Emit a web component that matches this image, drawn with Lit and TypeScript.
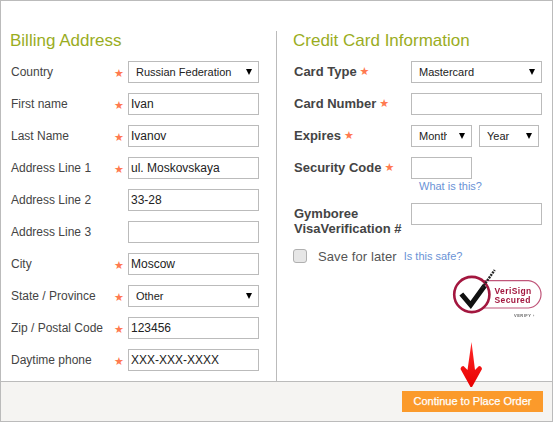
import { LitElement, html, css, svg } from "lit";
import { customElement } from "lit/decorators.js";

const billing = [
  { label: "Country", req: true, select: "Russian Federation" },
  { label: "First name", req: true, value: "Ivan" },
  { label: "Last Name", req: true, value: "Ivanov" },
  { label: "Address Line 1", req: true, value: "ul. Moskovskaya" },
  { label: "Address Line 2", req: false, value: "33-28" },
  { label: "Address Line 3", req: false, value: "" },
  { label: "City", req: true, value: "Moscow" },
  { label: "State / Province", req: true, select: "Other" },
  { label: "Zip / Postal Code", req: true, value: "123456" },
  { label: "Daytime phone", req: true, value: "XXX-XXX-XXXX" },
];

@customElement("app-root")
export class AppRoot extends LitElement {
  static styles = css`
    :host { display: block; width: 553px; height: 422px; font-family: "Liberation Sans", Arial, sans-serif; color: #444; }
    .frame { position: relative; box-sizing: border-box; width: 553px; height: 422px; border: 1px solid #bbb; display: flex; flex-direction: column; background: #fff; }
    .columns { flex: 1; display: flex; padding-top: 30px; min-height: 0; }
    .billing { width: 275px; box-sizing: border-box; padding-left: 9px; }
    .card { flex: 1; border-left: 1px solid #bbb; padding-left: 16px; }
    h2 { margin: 0; height: 30px; font-size: 17px; line-height: 20px; font-weight: 400; color: #9aad1e; }
    .rows { display: flex; flex-direction: column; gap: 10px; }
    .row { display: grid; grid-template-columns: 103px 14px 131px; align-items: center; height: 22px; padding-left: 1px; font-size: 12px; }
    .star { color: #ff7a50; font-family: "DejaVu Sans", sans-serif; font-weight: 400; font-size: 11px; line-height: 22px; height: 22px; padding-top: 2px; box-sizing: border-box; }
    input[type="text"], select { box-sizing: border-box; height: 22px; width: 131px; border: 1px solid #bbb; background: #fff; margin: 0; border-radius: 0; font: 12px "Liberation Sans", Arial, sans-serif; color: #222; outline: none; }
    input[type="text"] { padding: 0 2px; }
    select { appearance: none; -webkit-appearance: none; padding: 0 24px 0 7px; font-size: 11px; }
    .sel { position: relative; display: block; height: 22px; width: 131px; }
    .sel.short { width: 61px; }
    .sel.year { width: 60px; }
    .arrow { position: absolute; right: 7px; top: 8px; width: 6px; height: 6px; pointer-events: none; }
    .crow { display: grid; grid-template-columns: 117px auto; align-items: start; font-size: 13px; font-weight: 700; color: #444; padding-left: 1px; }
    .crow .lbl { display: flex; align-items: center; gap: 3px; height: 22px; line-height: 22px; }
    .crow .star { line-height: 14px; height: 14px; padding: 0; }
    .pair { display: flex; gap: 7px; }
    input.short { width: 61px; }
    .link { color: #6a93d6; font-size: 11px; font-weight: 400; text-decoration: none; }
    .what { display: block; line-height: 14px; padding-left: 8px; }
    .crow .two { display: block; height: 33px; line-height: 15px; padding-top: 3px; box-sizing: border-box; }
    .stack { display: flex; flex-direction: column; }
    .save { display: flex; align-items: center; margin-top: 12px; height: 16px; font-size: 13px; letter-spacing: 0.1px; color: #555; }
    .save input { appearance: none; -webkit-appearance: none; width: 14px; height: 14px; margin: 0 11px 0 0; background: #e6e6e6; border: 1px solid #b0b0b0; border-radius: 3px; }
    .save .link { margin-left: 7px; letter-spacing: 0; }
    .logoBox { display: flex; justify-content: flex-end; padding-right: 4px; }
    .logo { filter: blur(0.35px); }
    .footer { height: 40px; box-sizing: border-box; border-top: 1px solid #bbb; background: #f5f4f2; display: flex; justify-content: flex-end; align-items: flex-start; padding: 9px 9px 0 0; }
    .btn { box-sizing: border-box; width: 141px; height: 21px; border: 0; padding: 0; background: #fb9a2b; color: #fff; font: 400 11px/21px "Liberation Sans", Arial, sans-serif; -webkit-text-stroke: 0.25px #fff; }
    .red { position: absolute; left: 458px; top: 338px; width: 23px; height: 48px; pointer-events: none; }
  `;

  private sel(v: string, cls = "") {
    return html`<span class="sel ${cls}"><select style="width:100%"><option>${v}</option></select>
      <svg class="arrow" viewBox="0 0 6 6"><polygon points="0,0 6,0 3,6" fill="#000"/></svg></span>`;
  }

  private logo() {
    return svg`<svg class="logo" width="100" height="56" viewBox="0 0 100 56">
      <path d="M28 16.7 H80.5 A13.7 13.7 0 0 1 80.5 44 H28" fill="none" stroke="#c0567a" stroke-width="1.2"/>
      <circle cx="23.8" cy="30.5" r="17.6" fill="#fff" stroke="#a3173f" stroke-width="2.6"/>
      <path d="M13.3 30 L22.7 41 L36.7 21.7" fill="none" stroke="#111" stroke-width="5"/>
      <path d="M34 24 L46.7 6" fill="none" stroke="#222" stroke-width="2.4" stroke-dasharray="2 1"/>
      <text x="46.5" y="30" font-family="Liberation Sans, Arial, sans-serif" font-size="8.5" font-weight="700" fill="#a3173f" letter-spacing=".4">VeriSign</text>
      <text x="46.5" y="39" font-family="Liberation Sans, Arial, sans-serif" font-size="8.5" font-weight="700" fill="#a3173f" letter-spacing=".4">Secured</text>
      <text x="66" y="53" font-family="Liberation Sans, Arial, sans-serif" font-size="4" font-weight="700" fill="#666" letter-spacing=".5">VERIFY ›</text>
    </svg>`;
  }

  render() {
    return html`<div class="frame">
      <div class="columns">
        <section class="billing">
          <h2>Billing Address</h2>
          <div class="rows">
            ${billing.map((r) => html`<div class="row">
              <span>${r.label}</span>
              <span class="star">${r.req ? "★" : ""}</span>
              ${r.select ? this.sel(r.select) : html`<input type="text" .value=${r.value ?? ""} />`}
            </div>`)}
          </div>
        </section>
        <section class="card">
          <h2>Credit Card Information</h2>
          <div class="rows">
            <div class="crow"><span class="lbl">Card Type<span class="star">★</span></span>${this.sel("Mastercard")}</div>
            <div class="crow"><span class="lbl">Card Number<span class="star">★</span></span><input type="text" /></div>
            <div class="crow"><span class="lbl">Expires<span class="star">★</span></span>
              <div class="pair">${this.sel("Month", "short")}${this.sel("Year", "year")}</div></div>
            <div class="crow"><span class="lbl">Security Code<span class="star">★</span></span>
              <div class="stack"><input type="text" class="short" /><a class="link what" href="#">What is this?</a></div></div>
            <div class="crow"><span class="lbl two">Gymboree<br />VisaVerification #</span><input type="text" /></div>
          </div>
          <div class="save"><input type="checkbox" /><span>Save for later</span><a class="link" href="#">Is this safe?</a></div>
          <div class="logoBox">${this.logo()}</div>
        </section>
      </div>
      <div class="footer"><button class="btn">Continue to Place Order</button></div>
      <svg class="red" viewBox="0 0 23 48">
        <defs><linearGradient id="g" x1="0" y1="0" x2="0" y2="1"><stop offset="0" stop-color="#ff2a2a"/><stop offset="1" stop-color="#e80000"/></linearGradient></defs>
        <path d="M12.5 3 L16 31 L20 27 Q22.5 27 23 30 L13 48 L11.5 48 L1.5 30 Q2 27 4.5 27 L8.5 31 Z" fill="url(#g)"/>
      </svg>
    </div>`;
  }
}
